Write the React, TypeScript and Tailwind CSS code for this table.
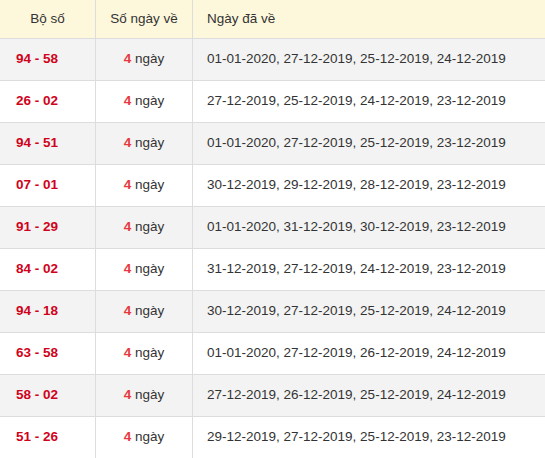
import React from "react";

const rows: [string, string][] = [
  ["94 - 58", "01-01-2020, 27-12-2019, 25-12-2019, 24-12-2019"],
  ["26 - 02", "27-12-2019, 25-12-2019, 24-12-2019, 23-12-2019"],
  ["94 - 51", "01-01-2020, 27-12-2019, 25-12-2019, 23-12-2019"],
  ["07 - 01", "30-12-2019, 29-12-2019, 28-12-2019, 23-12-2019"],
  ["91 - 29", "01-01-2020, 31-12-2019, 30-12-2019, 23-12-2019"],
  ["84 - 02", "31-12-2019, 27-12-2019, 24-12-2019, 23-12-2019"],
  ["94 - 18", "30-12-2019, 27-12-2019, 25-12-2019, 24-12-2019"],
  ["63 - 58", "01-01-2020, 27-12-2019, 26-12-2019, 24-12-2019"],
  ["58 - 02", "27-12-2019, 26-12-2019, 25-12-2019, 24-12-2019"],
  ["51 - 26", "29-12-2019, 27-12-2019, 25-12-2019, 23-12-2019"],
];

export default function App() {
  return (
    <div className="w-[545px] h-[458px] overflow-hidden bg-white text-[#333] text-[13.5px] font-['Liberation_Sans',Arial,sans-serif]">
      <div className="grid grid-cols-[96px_97px_1fr] h-[39px] bg-[#fdf8dc] border-b border-[#ddd]">
        <div className="flex items-center justify-center border-r border-[#ddd]">Bộ số</div>
        <div className="flex items-center justify-center border-r border-[#ddd]">Số ngày về</div>
        <div className="flex items-center pl-[14px]">Ngày đã về</div>
      </div>
      {rows.map(([pair, dates], i) => (
        <div
          key={i}
          className={`grid grid-cols-[96px_97px_1fr] h-[42px] border-b border-[#ddd] ${i % 2 === 0 ? "bg-[#f3f3f3]" : "bg-white"}`}
        >
          <div className="flex items-center pl-4 border-r border-[#ddd] font-bold text-[#d0021b]">{pair}</div>
          <div className="flex items-center justify-center border-r border-[#ddd]">
            <span className="font-bold text-[#e8383d]">4</span>
            <span>&nbsp;ngày</span>
          </div>
          <div className="flex items-center pl-[14px] whitespace-nowrap">{dates}</div>
        </div>
      ))}
    </div>
  );
}
